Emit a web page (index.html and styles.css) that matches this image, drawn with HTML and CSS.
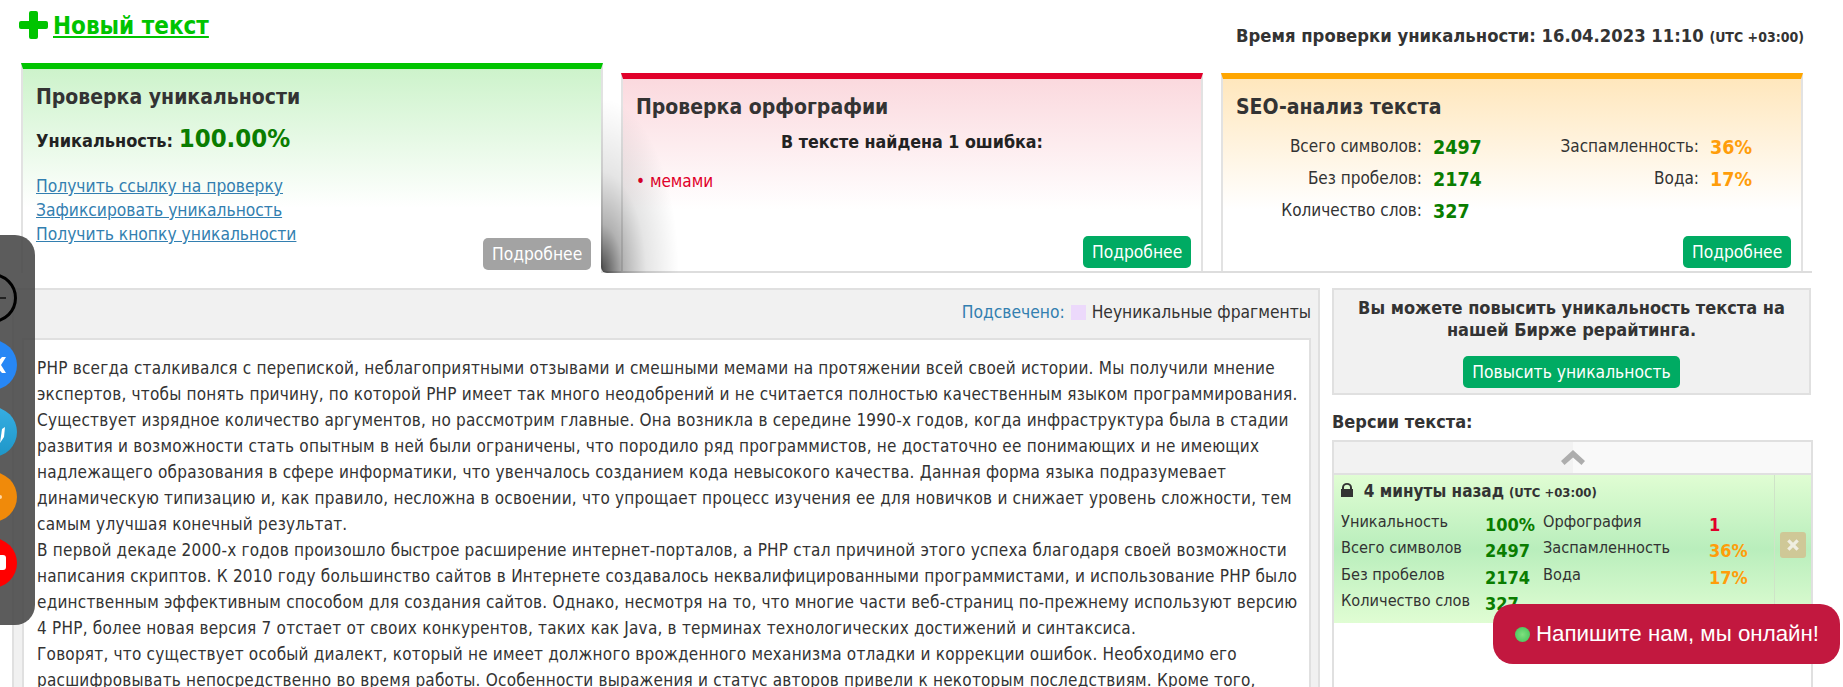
FILE: index.html
```html
<!DOCTYPE html>
<html lang="ru">
<head>
    <meta charset="UTF-8">
    <meta name="viewport" content="width=device-width, initial-scale=1.0">
    <title>Проверка уникальности</title>
    <link rel="stylesheet" href="styles.css">
</head>
<body>
    <div class="page">
        <header class="top">
            <a class="new-text" href="#">
                <svg class="plus" viewBox="0 0 29 28"><path d="M10 2a2 2 0 0 1 2-2h5a2 2 0 0 1 2 2v8h8a2 2 0 0 1 2 2v4a2 2 0 0 1-2 2h-8v8a2 2 0 0 1-2 2h-5a2 2 0 0 1-2-2v-8H2a2 2 0 0 1-2-2v-4a2 2 0 0 1 2-2h8z"/></svg>
                <span>Новый текст</span>
            </a>
            <div class="check-time">Время проверки уникальности: 16.04.2023 11:10 <small>(UTC +03:00)</small></div>
        </header>

        <section class="cards">
            <div class="card card-green">
                <h3>Проверка уникальности</h3>
                <p class="uniq">Уникальность: <b>100.00%</b></p>
                <div class="card-links">
                    <a href="#">Получить ссылку на проверку</a>
                    <a href="#">Зафиксировать уникальность</a>
                    <a href="#">Получить кнопку уникальности</a>
                </div>
                <a class="btn btn-gray more" href="#">Подробнее</a>
            </div>
            <div class="cards-side">
                <div class="side-shadow"></div>
                <div class="card card-red">
                    <h3>Проверка орфографии</h3>
                    <p class="errors-title">В тексте найдена 1 ошибка:</p>
                    <p class="error-word">• мемами</p>
                    <a class="btn more" href="#">Подробнее</a>
                </div>
                <div class="card card-orange">
                    <h3>SEO-анализ текста</h3>
                    <div class="seo">
                        <span class="seo-label">Всего символов:</span><b class="good">2497</b>
                        <span class="seo-label">Заспамленность:</span><b class="warn">36%</b>
                        <span class="seo-label">Без пробелов:</span><b class="good">2174</b>
                        <span class="seo-label">Вода:</span><b class="warn">17%</b>
                        <span class="seo-label">Количество слов:</span><b class="good">327</b>
                    </div>
                    <a class="btn more" href="#">Подробнее</a>
                </div>
            </div>
        </section>

        <main class="result">
            <div class="text-panel">
                <div class="legend">
                    <a href="#">Подсвечено:</a>
                    <span class="swatch"></span>
                    <span>Неуникальные фрагменты</span>
                </div>
                <div class="text-body">
                    PHP всегда сталкивался с перепиской, неблагоприятными отзывами и смешными мемами на протяжении всей своей истории. Мы получили мнение<br>
                    экспертов, чтобы понять причину, по которой PHP имеет так много неодобрений и не считается полностью качественным языком программирования.<br>
                    Существует изрядное количество аргументов, но рассмотрим главные. Она возникла в середине 1990-х годов, когда инфраструктура была в стадии<br>
                    развития и возможности стать опытным в ней были ограничены, что породило ряд программистов, не достаточно ее понимающих и не имеющих<br>
                    надлежащего образования в сфере информатики, что увенчалось созданием кода невысокого качества. Данная форма языка подразумевает<br>
                    динамическую типизацию и, как правило, несложна в освоении, что упрощает процесс изучения ее для новичков и снижает уровень сложности, тем<br>
                    самым улучшая конечный результат.<br>
                    В первой декаде 2000-х годов произошло быстрое расширение интернет-порталов, а PHP стал причиной этого успеха благодаря своей возможности<br>
                    написания скриптов. К 2010 году большинство сайтов в Интернете создавалось неквалифицированными программистами, и использование PHP было<br>
                    единственным эффективным способом для создания сайтов. Однако, несмотря на то, что многие части веб-страниц по-прежнему используют версию<br>
                    4 PHP, более новая версия 7 отстает от своих конкурентов, таких как Java, в терминах технологических достижений и синтаксиса.<br>
                    Говорят, что существует особый диалект, который не имеет должного врожденного механизма отладки и коррекции ошибок. Необходимо его<br>
                    расшифровывать непосредственно во время работы. Особенности выражения и статус авторов привели к некоторым последствиям. Кроме того,
                </div>
            </div>

            <aside class="sidebar">
                <div class="boost">
                    <p>Вы можете повысить уникальность текста на нашей Бирже рерайтинга.</p>
                    <a class="btn" href="#">Повысить уникальность</a>
                </div>
                <h4>Версии текста:</h4>
                <div class="versions">
                    <div class="versions-up">
                        <svg viewBox="0 0 24 15"><path d="M12 0l12 11-3.500 4L12 7.500 3.500 15 0 11z"/></svg>
                    </div>
                    <div class="version">
                        <div class="version-info">
                            <div class="version-time">
                                <svg class="lock" viewBox="0 0 12 14"><path d="M1 6V4.500a5 4.500 0 0 1 10 0V6h1v8H0V6zm2 0h6V4.500a3 2.800 0 0 0-6 0z"/></svg>
                                <b>4 минуты назад</b> <small>(UTC +03:00)</small>
                            </div>
                            <div class="version-stats">
                                <span>Уникальность</span><b class="good">100%</b><span>Орфография</span><b class="bad">1</b>
                                <span>Всего символов</span><b class="good">2497</b><span>Заспамленность</span><b class="warn">36%</b>
                                <span>Без пробелов</span><b class="good">2174</b><span>Вода</span><b class="warn">17%</b>
                                <span>Количество слов</span><b class="good">327</b>
                            </div>
                        </div>
                        <div class="version-del">
                            <div class="del-btn">
                                <svg viewBox="0 0 12 12"><path d="M1 3l2-2 3 3 3-3 2 2-3 3 3 3-2 2-3-3-3 3-2-2 3-3z"/></svg>
                            </div>
                        </div>
                    </div>
                </div>
            </aside>
        </main>
    </div>

    <div class="social">
        <div class="social-icon s-minus"><i></i></div>
        <div class="social-icon s-vk"><svg viewBox="0 0 50 50"><path d="M28 25l7-8h4l-5 8 5 8h-4z" fill="#fff"/></svg></div>
        <div class="social-icon s-tg"><svg viewBox="0 0 50 50"><path d="M33 36l2-14 3-2-1 10z" fill="#fff"/></svg></div>
        <div class="social-icon s-ok"><svg viewBox="0 0 50 50"><circle cx="33" cy="25" r="2" fill="#ffd9a8"/></svg></div>
        <div class="social-icon s-yt"><svg viewBox="0 0 50 50"><rect x="28" y="17" width="11" height="15" rx="3" fill="#fff"/></svg></div>
    </div>

    <div class="chat">
        <span class="chat-dot"></span>
        <span>Напишите нам, мы онлайн!</span>
    </div>
</body>
</html>
```

FILE: styles.css
```css
html, body {
    margin: 0;
    padding: 0;
    height: 100%;
    overflow: hidden;
}
body {
    font-family: "DejaVu Sans Condensed", "DejaVu Sans", sans-serif;
    font-stretch: condensed;
    font-size: 16px;
    color: #333;
    background: #fff;
}
a {
    color: #337fb0;
}
p, h3, h4 {
    margin: 0;
}
.page {
    height: 687px;
    overflow: hidden;
}
.top {
    display: flex;
    justify-content: space-between;
    height: 63px;
    padding: 11px 39px 0 19px;
    box-sizing: border-box;
}
.new-text {
    display: flex;
    align-items: flex-start;
    gap: 5px;
    height: 30px;
    color: #00c400;
    font-size: 24px;
    font-weight: bold;
    line-height: 27px;
}
.new-text span {
    margin-top: 2px;
}
.plus {
    width: 29px;
    height: 28px;
    fill: #00c400;
}
.check-time {
    margin-top: 14px;
    font-size: 18.3px;
    font-weight: bold;
    line-height: 22px;
}
.check-time small {
    font-size: 14px;
}

.cards {
    display: flex;
    align-items: stretch;
    height: 210px;
    padding-left: 21px;
}
.cards-side {
    position: relative;
    display: flex;
    gap: 18px;
    flex: none;
    width: 1209px;
    padding: 10px 9px 0 18px;
    box-sizing: border-box;
    border-bottom: 2px solid #ddd;
}
.side-shadow {
    position: absolute;
    left: -2px;
    top: 0;
    width: 90px;
    height: 210px;
    border-bottom-left-radius: 6px;
    background: radial-gradient(ellipse 78px 175px at 0 100%, rgba(0,0,0,0.72), rgba(0,0,0,0.3) 28%, rgba(0,0,0,0.1) 58%, transparent);
    z-index: 2;
}
.card {
    position: relative;
    flex: none;
    width: 582px;
    padding: 13px 13px 0;
    box-sizing: border-box;
    border-top: 6px solid;
    border-left: 2px solid #e2e2e2;
    border-right: 2px solid #e2e2e2;
}
.card h3 {
    font-size: 21px;
    line-height: 30px;
    color: #333;
}
.card-green {
    border-top-color: #00c400;
    background: linear-gradient(#cdf3cb, #fff 68%);
}
.card-red {
    border-top-color: #e1002a;
    background: linear-gradient(#fbd9de, #fff 68%);
}
.card-orange {
    border-top-color: #ffa600;
    background: linear-gradient(#ffe7bd, #fff 68%);
}
.uniq {
    margin-top: 9px;
    font-size: 18px;
    font-weight: bold;
    line-height: 34px;
    color: #222;
}
.uniq b {
    font-size: 25.500px;
    color: #0a7d00;
}
.card-links {
    margin-top: 16px;
    line-height: 24px;
}
.card-links a {
    display: block;
    font-size: 17.300px;
}
.btn {
    display: inline-block;
    padding: 0 9px;
    height: 32px;
    line-height: 32px;
    font-size: 17.300px;
    color: #fff;
    background: #00ab63;
    border-radius: 5px;
    text-decoration: none;
}
.btn-gray {
    background: #a3a3a3;
}
.more {
    position: absolute;
    right: 10px;
    bottom: 3px;
    width: 90px;
    text-align: center;
}
.errors-title {
    margin-top: 7px;
    font-size: 17.700px;
    font-weight: bold;
    text-align: center;
    line-height: 26px;
    color: #222;
}
.error-word {
    margin-top: 13px;
    font-size: 17px;
    line-height: 26px;
    color: #e1002a;
}
.seo {
    display: grid;
    grid-template-columns: 186px 84px 171px auto;
    column-gap: 11px;
    margin-top: 8px;
    font-size: 17px;
    line-height: 32px;
}
.seo-label {
    text-align: right;
}
.seo b {
    position: relative;
    top: 2px;
    font-size: 19.500px;
    line-height: 32px;
}
.good {
    color: #0a7d00;
}
.warn {
    color: #ff9d0a;
}
.bad {
    color: #e1002a;
}

.result {
    display: flex;
    gap: 12px;
    margin-top: 15px;
    padding-left: 12px;
}
.text-panel {
    flex: none;
    width: 1308px;
    padding: 0 7px 0 8px;
    box-sizing: border-box;
    background: #f1f1f1;
    border-top: 2px solid #e0e0e0;
    border-left: 2px solid #e0e0e0;
    border-right: 2px solid #e0e0e0;
}
.legend {
    display: flex;
    justify-content: flex-end;
    align-items: center;
    gap: 6px;
    height: 44px;
    padding-bottom: 4px;
    font-size: 17.300px;
}
.legend a {
    text-decoration: none;
}
.swatch {
    width: 15px;
    height: 15px;
    background: #ecd9fb;
}
.text-body {
    height: 400px;
    padding: 15px 13px;
    box-sizing: border-box;
    background: #fff;
    border: 2px solid #e0e0e0;
    font-size: 17px;
    letter-spacing: 0.22px;
    line-height: 26px;
    white-space: nowrap;
}
.sidebar {
    flex: none;
    width: 481px;
}
.boost {
    width: 479px;
    height: 107px;
    padding-top: 7px;
    box-sizing: border-box;
    background: #f1f1f1;
    border: 2px solid #e0e0e0;
    text-align: center;
}
.boost p {
    padding: 0 20px;
    font-size: 18px;
    font-weight: bold;
    line-height: 22px;
}
.boost .btn {
    margin-top: 15px;
}
.sidebar h4 {
    margin: 13px 0 4px;
    font-size: 18px;
    line-height: 28px;
}
.versions {
    height: 300px;
    border: 2px solid #e0e0e0;
    box-sizing: border-box;
}
.versions-up {
    display: flex;
    justify-content: center;
    align-items: center;
    height: 33px;
    background: linear-gradient(90deg, #f2f2f2 50%, #f9f9f9 50%);
    border-bottom: 2px solid #e0e0e0;
    box-sizing: border-box;
}
.versions-up svg {
    width: 24px;
    height: 15px;
    fill: #adadad;
}
.version {
    display: flex;
    height: 148px;
    background: linear-gradient(#e0fdd3, #b9eebc 50%, #e0fdd3);
}
.version-info {
    flex: 1;
    padding: 5px 8px 0 7px;
}
.version-time {
    font-size: 17px;
    line-height: 22px;
    white-space: nowrap;
}
.version-time small {
    font-size: 13px;
    font-weight: bold;
}
.lock {
    width: 12px;
    height: 14px;
    margin-right: 6px;
    fill: #333;
}
.version-stats {
    display: grid;
    grid-template-columns: 144px 58px 166px auto;
    margin-top: 5px;
    font-size: 16.200px;
    line-height: 26.400px;
}
.version-stats b {
    font-size: 18px;
    position: relative;
    top: 3px;
}
.version-del {
    display: flex;
    justify-content: center;
    align-items: center;
    width: 36px;
    border-left: 1px solid #cfe3c8;
    padding-bottom: 8px;
}
.del-btn {
    display: flex;
    justify-content: center;
    align-items: center;
    width: 26px;
    height: 26px;
    border-radius: 3px;
    background: #cfc897;
}
.del-btn svg {
    width: 14px;
    height: 14px;
    fill: #efeee0;
}

.social {
    position: fixed;
    left: 0;
    top: 235px;
    width: 35px;
    height: 390px;
    background: rgba(70,70,70,0.88);
    border-radius: 0 20px 20px 0;
    overflow: hidden;
}
.social-icon {
    position: absolute;
    left: -33px;
    width: 50px;
    height: 50px;
    border-radius: 50%;
    box-sizing: border-box;
}
.social-icon svg {
    display: block;
    width: 50px;
    height: 50px;
}
.s-minus {
    top: 38px;
    border: 3px solid #000;
}
.s-minus i {
    position: absolute;
    left: 30px;
    top: 21px;
    width: 6px;
    height: 2px;
    background: #222;
}
.s-vk {
    top: 105px;
    background: #2787f5;
}
.s-tg {
    top: 172px;
    background: linear-gradient(#37aee2, #1e96c8);
}
.s-ok {
    top: 237px;
    background: #f08a0a;
}
.s-yt {
    top: 303px;
    background: #f00;
}
.chat {
    position: fixed;
    left: 1493px;
    top: 604px;
    display: flex;
    align-items: center;
    gap: 6px;
    width: 347px;
    height: 60px;
    padding-left: 22px;
    box-sizing: border-box;
    background: #c2183f;
    border-radius: 20px;
    color: #fff;
    font-family: "Liberation Sans", Arial, sans-serif;
    font-stretch: normal;
    font-size: 22.300px;
}
.chat-dot {
    width: 15px;
    height: 15px;
    border-radius: 50%;
    background: radial-gradient(circle, #7fe07f, #3fbf55);
}
```
